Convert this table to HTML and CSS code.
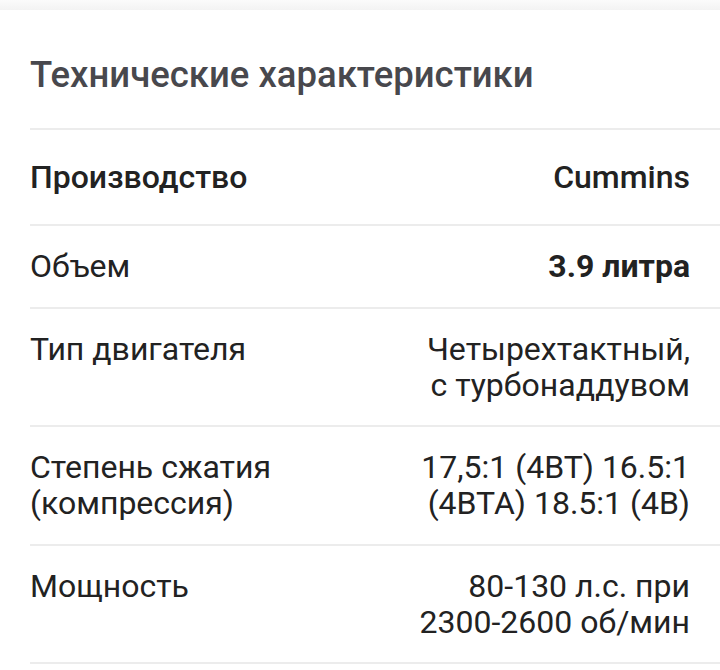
FILE: index.html
```html
<!DOCTYPE html>
<html lang="ru">
<head>
<meta charset="utf-8">
<link rel="stylesheet" href="styles.css">
</head>
<body>
<div class="top-band"></div>
<section class="card">
  <h2 class="title">Технические характеристики</h2>
  <div class="specs">
    <div class="row row-head">
      <div class="label">Производство</div>
      <div class="value">Cummins</div>
    </div>
    <div class="row">
      <div class="label">Объем</div>
      <div class="value strong">3.9 литра</div>
    </div>
    <div class="row">
      <div class="label">Тип двигателя</div>
      <div class="value">Четырехтактный,<br>с турбонаддувом</div>
    </div>
    <div class="row">
      <div class="label">Степень сжатия<br>(компрессия)</div>
      <div class="value">17,5:1 (4BT) 16.5:1<br>(4BTA) 18.5:1 (4B)</div>
    </div>
    <div class="row">
      <div class="label">Мощность</div>
      <div class="value">80-130 л.с. при<br>2300-2600 об/мин</div>
    </div>
  </div>
</section>
</body>
</html>
```

FILE: styles.css
```css
html, body {
  margin: 0;
  padding: 0;
  background: #ffffff;
}
body {
  font-family: Roboto, "Noto Sans", sans-serif;
  color: #222222;
}
.top-band {
  height: 10px;
  background: linear-gradient(#fbfbfb, #f3f3f3);
}
.card {
  padding: 0 0 0 30px;
}
.title {
  margin: 0;
  padding: 42px 0 30px;
  font-size: 36.5px;
  line-height: 46px;
  font-weight: 500;
  color: #48484d;
  border-bottom: 2px solid #ececec;
}
.row {
  display: flex;
  justify-content: space-between;
  align-items: flex-start;
  padding: 22.25px 30px 22.25px 0;
  border-bottom: 2px solid #ececec;
  font-size: 32px;
  line-height: 36px;
}
.row-head {
  padding: 29px 30px 29px 0;
}
.row-head .label,
.row-head .value {
  font-weight: 500;
}
.value {
  text-align: right;
}
.strong {
  font-weight: 700;
}
```
